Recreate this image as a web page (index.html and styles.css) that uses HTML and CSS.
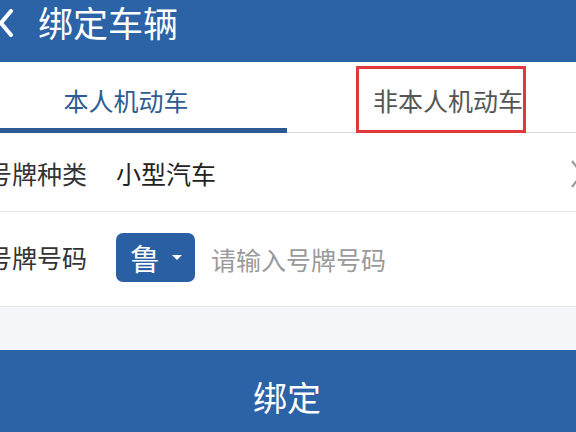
FILE: index.html
```html
<!DOCTYPE html>
<html lang="zh-CN">
<head>
<meta charset="utf-8">
<title>绑定车辆</title>
<link rel="stylesheet" href="styles.css">
</head>
<body>
<div class="screen">
  <div class="header">
    <svg class="back" width="16" height="28" viewBox="0 0 16 28"><polyline points="13,2 3,14 13,26" fill="none" stroke="#fff" stroke-width="4" stroke-linecap="round" stroke-linejoin="round"/></svg>
    <div class="title">绑定车辆</div>
  </div>
  <div class="tabs">
    <div class="tab active">本人机动车</div>
    <div class="tab">非本人机动车<span class="mark"></span></div>
  </div>
  <div class="row row1">
    <div class="label">号牌种类</div>
    <div class="value">小型汽车</div>
    <svg class="chev" width="14" height="30" viewBox="0 0 14 30"><polyline points="2,2 12,15 2,28" fill="none" stroke="#9a9a9a" stroke-width="2.2"/></svg>
  </div>
  <div class="row row2">
    <div class="label">号牌号码</div>
    <div class="prov"><span class="prov-text">鲁</span><span class="caret"></span></div>
    <div class="placeholder">请输入号牌号码</div>
  </div>
  <div class="spacer"></div>
  <div class="submit">绑定</div>
</div>
</body>
</html>
```
FILE: styles.css
```css
html, body {
  margin: 0;
  padding: 0;
  width: 576px;
  height: 432px;
  overflow: hidden;
  background: #fff;
  font-family: "Noto Sans CJK SC", "Noto Sans", sans-serif;
}
.screen {
  width: 644px;
  margin-left: -35px;
}
.header {
  height: 62px;
  background: #2c62a6;
  display: flex;
  align-items: flex-start;
  padding-left: 33px;
  box-sizing: border-box;
}
.back {
  margin-top: 9px;
}
.title {
  margin-left: 24px;
  color: #fff;
  font-size: 35px;
  line-height: 40px;
  padding-top: 2px;
}
.tabs {
  display: flex;
  border-bottom: 1px solid #d6d9dd;
  height: 71px;
  box-sizing: border-box;
}
.tab {
  flex: 1;
  position: relative;
  text-align: center;
  font-size: 25px;
  line-height: 36px;
  padding-top: 20px;
  color: #555;
  box-sizing: border-box;
}
.tab.active {
  color: #2d5c93;
  height: 71px;
  border-bottom: 5px solid #2c5a94;
}
.mark {
  position: absolute;
  left: 69px;
  top: 4px;
  width: 170px;
  height: 67px;
  box-sizing: border-box;
  border: 3px solid #e0393b;
}
.row {
  display: flex;
  align-items: center;
  background: #fff;
  border-bottom: 1px solid #e2e5e9;
  padding-left: 22px;
  padding-right: 25px;
  box-sizing: border-box;
}
.row1 {
  height: 79px;
  padding-top: 2px;
}
.row2 {
  height: 95px;
  padding-bottom: 4px;
}
.label {
  width: 129px;
  font-size: 25px;
  color: #333;
}
.value {
  flex: 1;
  font-size: 25px;
  color: #222;
}
.chev {
  margin-top: 2px;
}
.prov {
  width: 79px;
  height: 49px;
  border-radius: 7px;
  background: #2a5fa3;
  display: flex;
  align-items: center;
  padding-left: 14px;
  box-sizing: border-box;
}
.prov-text {
  color: #fff;
  font-size: 30px;
  line-height: 40px;
}
.caret {
  margin-left: 12px;
  width: 0;
  height: 0;
  border-left: 5px solid transparent;
  border-right: 5px solid transparent;
  border-top: 5px solid #fff;
}
.placeholder {
  margin-left: 16px;
  font-size: 25px;
  color: #9a9a9a;
  padding-top: 4px;
}
.spacer {
  height: 43px;
  background: #f5f7fa;
}
.submit {
  height: 82px;
  background: #2c62a6;
  color: #fff;
  text-align: center;
  font-size: 34px;
  line-height: 50px;
  padding-top: 22px;
  box-sizing: border-box;
}
```
